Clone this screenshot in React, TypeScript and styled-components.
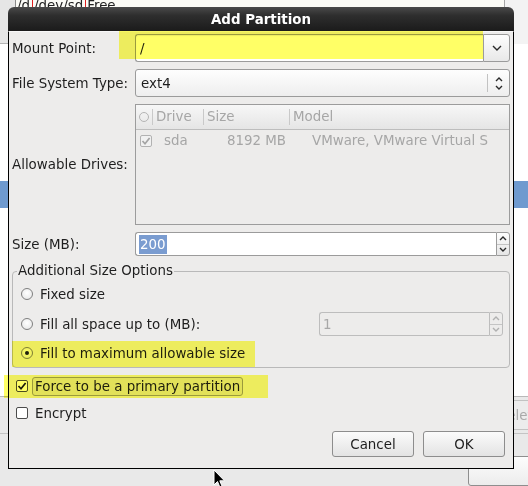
import React from "react";
import styled, { createGlobalStyle } from "styled-components";

const GlobalStyle = createGlobalStyle`
  html, body { margin: 0; padding: 0; }
  body {
    background: #e9e9e9;
    font-family: "DejaVu Sans", "Liberation Sans", sans-serif;
    font-size: 13.4px;
    color: #1e1e1e;
  }
  * { box-sizing: border-box; }
`;

// ---- desktop / window behind the dialog ----
const Desktop = styled.div`
  position: relative;
  width: 528px;
  height: 486px;
  overflow: hidden;
  background: #e9e9e9;
`;

const BackWindow = styled.div`
  display: flex;
  flex-direction: column;
  height: 100%;
`;

const ColumnHeader = styled.div`
  display: flex;
  align-items: flex-start;
  height: 44px;
  border-bottom: 1px solid #b4b4b4;
  background: #e6e6e6;
`;

const HeaderGap = styled.div`
  width: 15px;
`;

const HeaderCell = styled.div`
  display: flex;
  width: 490px;
  height: 26px;
  background: #fbfbf6;
  border-left: 1px solid #8a8a8a;
  border-right: 1px solid #a6a6a6;
`;

const HeaderCol = styled.span<{ $mark?: boolean }>`
  padding: 0 2px 0 1px;
  margin-top: -1px;
  line-height: 13px;
  height: 26px;
  color: #222;
  border-right: ${(p) => (p.$mark ? "1px solid #e02020" : "none")};
`;

const HeaderTail = styled.div`
  flex: 1;
  height: 44px;
  background: #f3f3f3;
`;

const PartitionList = styled.div`
  height: 371px;
  background: #ffffff;
  padding-top: 137px;
`;

const SelectedRow = styled.div`
  height: 27px;
  background: #6f9acf;
`;

const BottomBar = styled.div`
  display: flex;
  justify-content: flex-end;
  align-items: center;
  height: 41px;
  border-top: 1px solid #b9b9b9;
  border-bottom: 1px solid #c4c4c4;
`;

const GhostButton = styled.div`
  width: 90px;
  height: 30px;
  margin-right: -32px;
  padding-left: 8px;
  border: 1px solid #c2c2c2;
  border-radius: 3px;
  background: #ececec;
  color: #a9a9a9;
  display: flex;
  align-items: center;
  justify-content: center;
`;

const LastRow = styled.div`
  display: flex;
  justify-content: flex-end;
  padding-top: 22px;
`;

const EdgeButton = styled.div`
  width: 80px;
  height: 30px;
  margin-right: -20px;
  border: 1px solid #8e8e8e;
  border-radius: 3px;
  background: linear-gradient(#fdfdfd, #ececec);
`;

// ---- dialog ----
const Dialog = styled.div`
  position: absolute;
  left: 8px;
  top: 7px;
  width: 506px;
  height: 462px;
  display: flex;
  flex-direction: column;
`;

const TitleBar = styled.div`
  height: 24px;
  border-radius: 6px 6px 0 0;
  background: linear-gradient(#4a4a4a, #2e2e2e 35%, #1b1b1b);
  color: #ffffff;
  font-weight: bold;
  display: flex;
  align-items: center;
  justify-content: center;
`;

const Body = styled.div`
  flex: 1;
  background: #edeceb;
  border: 1px solid #000;
  border-top: 1px solid #f7f7f7;
  padding: 2px 3px 0 3px;
  display: flex;
  flex-direction: column;
`;

const FormGrid = styled.div`
  display: grid;
  grid-template-columns: 123px 1fr;
  grid-template-rows: 28px 28px 121px 24px;
  row-gap: 7px;
  align-items: center;
`;

const FieldLabel = styled.div`
  color: #1e1e1e;
  white-space: nowrap;
`;

const ComboEntry = styled.div`
  display: flex;
  height: 28px;
`;

const EntryField = styled.div`
  flex: 1;
  display: flex;
  align-items: center;
  padding-left: 4px;
  background: #ffffff;
  border: 1px solid #9b9b9b;
  border-right: none;
  border-radius: 3px 0 0 3px;
  box-shadow: inset 0 1px 1px rgba(0, 0, 0, 0.08);
`;

const DropButton = styled.div`
  width: 27px;
  display: flex;
  align-items: center;
  justify-content: center;
  border: 1px solid #9b9b9b;
  border-radius: 0 3px 3px 0;
  background: linear-gradient(#fdfdfd, #e8e8e8);
`;

const ComboBox = styled.div`
  display: flex;
  align-items: center;
  height: 28px;
  padding-left: 5px;
  border: 1px solid #9b9b9b;
  border-radius: 3px;
  background: linear-gradient(#fefefe, #eeeeee);
`;

const ComboText = styled.div`
  flex: 1;
`;

const ComboArrows = styled.div`
  width: 22px;
  height: 18px;
  border-left: 1px solid #c2c2c2;
  display: flex;
  flex-direction: column;
  align-items: center;
  justify-content: center;
  gap: 3px;
`;

const DriveList = styled.div`
  height: 121px;
  border: 1px solid #9c9c9c;
  background: #edeceb;
  color: #a6a6a6;
`;

const ListGrid = styled.div<{ $head?: boolean }>`
  display: grid;
  grid-template-columns: 16px 51px 86px 1fr;
  align-items: center;
  height: ${(p) => (p.$head ? "25px" : "21px")};
  background: ${(p) => (p.$head ? "linear-gradient(#f7f7f7, #e5e5e5)" : "transparent")};
  border-bottom: ${(p) => (p.$head ? "1px solid #bdbdbd" : "none")};
`;

const HeadCol = styled.div<{ $sep?: boolean }>`
  height: 16px;
  line-height: 16px;
  padding-left: 3px;
  border-left: ${(p) => (p.$sep ? "1px solid #c9c9c9" : "none")};
  display: flex;
  align-items: center;
`;

const HeadRing = styled.span`
  width: 10px;
  height: 10px;
  border: 1px solid #b4b4b4;
  border-radius: 50%;
`;

const RowCell = styled.div<{ $pad?: number; $right?: boolean }>`
  padding-left: ${(p) => p.$pad ?? 0}px;
  padding-right: ${(p) => (p.$right ? 3 : 0)}px;
  white-space: nowrap;
  overflow: hidden;
  display: flex;
  justify-content: ${(p) => (p.$right ? "flex-end" : "flex-start")};
`;

const SpinBox = styled.div<{ $disabled?: boolean }>`
  display: flex;
  height: 24px;
  width: ${(p) => (p.$disabled ? "184px" : "auto")};
  margin-left: ${(p) => (p.$disabled ? "auto" : "0")};
  color: ${(p) => (p.$disabled ? "#a8a8a8" : "#1e1e1e")};
`;

const SpinEntry = styled.div<{ $disabled?: boolean }>`
  flex: 1;
  display: flex;
  align-items: center;
  padding-left: 3px;
  background: ${(p) => (p.$disabled ? "#edeceb" : "#ffffff")};
  border: 1px solid ${(p) => (p.$disabled ? "#bdbdbd" : "#9b9b9b")};
  border-right: none;
  border-radius: 3px 0 0 3px;
`;

const Selected = styled.span`
  background: #7a9cd0;
  color: #ffffff;
  padding: 1px 1px;
  line-height: 17px;
`;

const SpinButtons = styled.div<{ $disabled?: boolean }>`
  width: 14px;
  display: flex;
  flex-direction: column;
  border: 1px solid ${(p) => (p.$disabled ? "#bdbdbd" : "#9b9b9b")};
  border-radius: 0 3px 3px 0;
  background: ${(p) => (p.$disabled ? "#edeceb" : "linear-gradient(#fdfdfd, #e6e6e6)")};
`;

const SpinHalf = styled.div<{ $top?: boolean }>`
  flex: 1;
  display: flex;
  align-items: center;
  justify-content: center;
  border-bottom: ${(p) => (p.$top ? "1px solid #c4c4c4" : "none")};
`;

const SizeFrame = styled.fieldset`
  margin: 6px 0 0 0;
  padding: 2px 6px 2px 0;
  border: 1px solid #b9b9b9;
  border-radius: 4px;
  display: flex;
  flex-direction: column;
`;

const FrameLegend = styled.legend`
  margin-left: 4px;
  padding: 0 1px;
  line-height: 18px;
  color: #1e1e1e;
`;

const RadioRow = styled.div<{ $gap?: number }>`
  display: flex;
  align-items: center;
  height: 24px;
  padding-left: 8px;
  margin-top: ${(p) => p.$gap ?? 0}px;
`;

const RadioDot = styled.span<{ $on?: boolean }>`
  width: 12px;
  height: 12px;
  border: 1px solid #7f7f7f;
  border-radius: 50%;
  background: radial-gradient(circle at 50% 40%, #ffffff, #e4e4e4);
  display: flex;
  align-items: center;
  justify-content: center;
  margin-right: 7px;
  flex-shrink: 0;
  &::after {
    content: "";
    width: 4px;
    height: 4px;
    border-radius: 50%;
    background: #1e1e1e;
    display: ${(p) => (p.$on ? "block" : "none")};
  }
`;

const OptionText = styled.span`
  white-space: nowrap;
`;

const CheckRow = styled.div<{ $gap: number }>`
  display: flex;
  align-items: center;
  height: 22px;
  padding-left: 4px;
  margin-top: ${(p) => p.$gap}px;
`;

const CheckBox = styled.span<{ $muted?: boolean }>`
  width: 12px;
  height: 12px;
  border: 1px solid ${(p) => (p.$muted ? "#b2b2b2" : "#4c4c4c")};
  border-radius: 2px;
  background: ${(p) => (p.$muted ? "#f1f1f1" : "#ffffff")};
  display: flex;
  align-items: center;
  justify-content: center;
  flex-shrink: 0;
`;

const CheckLabel = styled.span<{ $focus?: boolean }>`
  margin-left: ${(p) => (p.$focus ? 4 : 7)}px;
  padding: 0 ${(p) => (p.$focus ? 2 : 0)}px;
  height: ${(p) => (p.$focus ? "19px" : "auto")};
  line-height: 17px;
  border: ${(p) => (p.$focus ? "1px solid #9b9a92" : "none")};
  border-radius: 3px;
  background: ${(p) => (p.$focus ? "#e2e1dd" : "transparent")};
  white-space: nowrap;
`;

const ButtonRow = styled.div`
  display: flex;
  justify-content: flex-end;
  gap: 9px;
  margin-top: 7px;
  padding-right: 5px;
`;

const DialogButton = styled.div`
  width: 82px;
  height: 26px;
  display: flex;
  align-items: center;
  justify-content: center;
  border: 1px solid #8d8d8d;
  border-radius: 3px;
  background: linear-gradient(#fbfbfb, #e3e3e3);
  color: #1e1e1e;
`;

// highlighter strokes drawn over the screenshot
const Marker = styled.div<{ $x: number; $y: number; $w: number; $h: number }>`
  position: absolute;
  left: ${(p) => p.$x}px;
  top: ${(p) => p.$y}px;
  width: ${(p) => p.$w}px;
  height: ${(p) => p.$h}px;
  background: #ffff66;
  mix-blend-mode: multiply;
  pointer-events: none;
`;

const Pointer = styled.svg`
  position: absolute;
  left: 213px;
  top: 469px;
`;

const Chevron = ({ up = false, w = 8, h = 4, color = "#2a2a2a" }: { up?: boolean; w?: number; h?: number; color?: string }) => (
  <svg width={w + 2} height={h + 2} viewBox={`-1 -1 ${w + 2} ${h + 2}`}>
    <polyline
      points={up ? `0,${h} ${w / 2},0 ${w},${h}` : `0,0 ${w / 2},${h} ${w},0`}
      fill="none"
      stroke={color}
      strokeWidth="1.4"
    />
  </svg>
);

const Tick = ({ color }: { color: string }) => (
  <svg width="10" height="10" viewBox="0 0 10 10">
    <polyline points="1.5,5 4,7.8 8.6,2" fill="none" stroke={color} strokeWidth="1.7" />
  </svg>
);

const Spin = ({ disabled, children }: { disabled?: boolean; children: React.ReactNode }) => {
  const arrow = disabled ? "#b0b0b0" : "#2a2a2a";
  return (
    <SpinBox $disabled={disabled}>
      <SpinEntry $disabled={disabled}>{children}</SpinEntry>
      <SpinButtons $disabled={disabled}>
        <SpinHalf $top>
          <Chevron up w={6} h={3} color={arrow} />
        </SpinHalf>
        <SpinHalf>
          <Chevron w={6} h={3} color={arrow} />
        </SpinHalf>
      </SpinButtons>
    </SpinBox>
  );
};

export default function App() {
  return (
    <>
      <GlobalStyle />
      <Desktop>
        <BackWindow>
          <ColumnHeader>
            <HeaderGap />
            <HeaderCell>
              <HeaderCol $mark>/d</HeaderCol>
              <HeaderCol $mark>/dev/sd</HeaderCol>
              <HeaderCol>Free</HeaderCol>
            </HeaderCell>
            <HeaderTail />
          </ColumnHeader>
          <PartitionList>
            <SelectedRow />
          </PartitionList>
          <BottomBar>
            <GhostButton>Delete</GhostButton>
          </BottomBar>
          <LastRow>
            <EdgeButton />
          </LastRow>
        </BackWindow>

        <Dialog>
          <TitleBar>Add Partition</TitleBar>
          <Body>
            <FormGrid>
              <FieldLabel>Mount Point:</FieldLabel>
              <ComboEntry>
                <EntryField>/</EntryField>
                <DropButton>
                  <Chevron />
                </DropButton>
              </ComboEntry>

              <FieldLabel>File System Type:</FieldLabel>
              <ComboBox>
                <ComboText>ext4</ComboText>
                <ComboArrows>
                  <Chevron up w={6} h={3} />
                  <Chevron w={6} h={3} />
                </ComboArrows>
              </ComboBox>

              <FieldLabel>Allowable Drives:</FieldLabel>
              <DriveList>
                <ListGrid $head>
                  <HeadCol>
                    <HeadRing />
                  </HeadCol>
                  <HeadCol $sep>Drive</HeadCol>
                  <HeadCol $sep>Size</HeadCol>
                  <HeadCol $sep>Model</HeadCol>
                </ListGrid>
                <ListGrid>
                  <RowCell $pad={4}>
                    <CheckBox $muted>
                      <Tick color="#a4a4a4" />
                    </CheckBox>
                  </RowCell>
                  <RowCell $pad={12}>sda</RowCell>
                  <RowCell $right>8192 MB</RowCell>
                  <RowCell $pad={23}>VMware, VMware Virtual S</RowCell>
                </ListGrid>
              </DriveList>

              <FieldLabel>Size (MB):</FieldLabel>
              <Spin>
                <Selected>200</Selected>
              </Spin>
            </FormGrid>

            <SizeFrame>
              <FrameLegend>Additional Size Options</FrameLegend>
              <RadioRow>
                <RadioDot />
                <OptionText>Fixed size</OptionText>
              </RadioRow>
              <RadioRow $gap={6}>
                <RadioDot />
                <OptionText>Fill all space up to (MB):</OptionText>
                <Spin disabled>1</Spin>
              </RadioRow>
              <RadioRow $gap={5}>
                <RadioDot $on />
                <OptionText>Fill to maximum allowable size</OptionText>
              </RadioRow>
            </SizeFrame>

            <CheckRow $gap={7}>
              <CheckBox>
                <Tick color="#1a1a1a" />
              </CheckBox>
              <CheckLabel $focus>Force to be a primary partition</CheckLabel>
            </CheckRow>
            <CheckRow $gap={5}>
              <CheckBox />
              <CheckLabel>Encrypt</CheckLabel>
            </CheckRow>

            <ButtonRow>
              <DialogButton>Cancel</DialogButton>
              <DialogButton>OK</DialogButton>
            </ButtonRow>
          </Body>
        </Dialog>

        <Marker $x={119} $y={31} $w={364} $h={28} />
        <Marker $x={12} $y={341} $w={243} $h={26} />
        <Marker $x={4} $y={375} $w={264} $h={23} />

        <Pointer width="13" height="20" viewBox="0 0 13 20">
          <path d="M1 1 L1 16 L4.5 12.5 L7 18.5 L9.2 17.6 L6.8 11.8 L11.5 11.8 Z" fill="#000" stroke="#fff" strokeWidth="1" />
        </Pointer>
      </Desktop>
    </>
  );
}
